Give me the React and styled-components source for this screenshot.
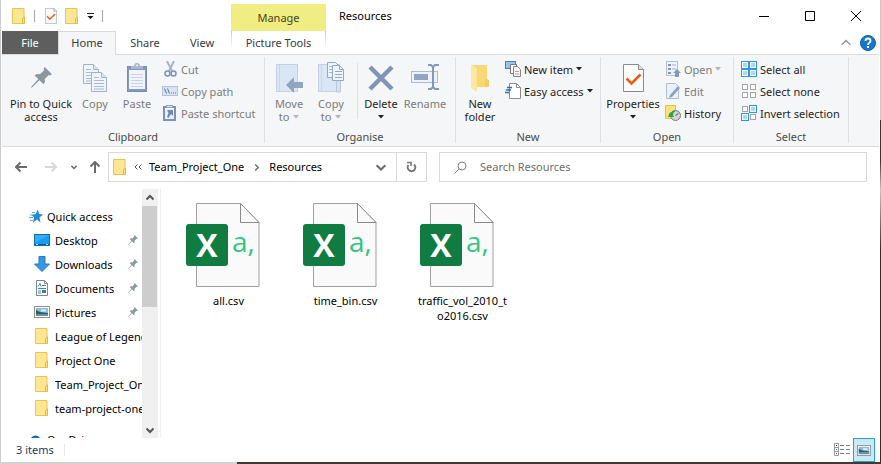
import React from "react";
import styled, { createGlobalStyle, css } from "styled-components";

const Global = createGlobalStyle`
  *, *::before, *::after { box-sizing: border-box; }
  body { margin: 0; font-family: "Noto Sans", "Open Sans", sans-serif; font-size: 11px; line-height: 13px; color: #1e1e1e; }
  button, input { font: inherit; color: inherit; margin: 0; padding: 0; border: 0; background: none; }
  button { white-space: nowrap; }
  h1, p, ul { margin: 0; padding: 0; font: inherit; list-style: none; }
  a { color: inherit; text-decoration: none; }
  svg { display: block; flex: none; }
`;

/* ---------- shell ---------- */
const Desktop = styled.div`
  height: 100vh;
  padding: 0 1px 2px 0;
  display: flex;
  background:
    linear-gradient(90deg, #d2d2d2 237px, #3c3936 237px) bottom / 100% 2px no-repeat,
    linear-gradient(180deg, #c9c9c9 120px, #44351b 120px, #38342d 160px, #c9c4bc 190px, #302d2a 250px);
`;
const Window = styled.main`
  flex: 1;
  min-width: 0;
  display: flex;
  flex-direction: column;
  background: #fff;
  border-left: 1px solid #cccccc;
  padding-left: 1px;
`;

/* ---------- title bar ---------- */
const TitleBar = styled.header`
  display: flex;
  align-items: center;
  height: 31px;
  padding-right: 1px;
`;
const QuickTools = styled.div`
  display: flex;
  align-items: center;
  width: 229px;
  padding-left: 10px;
  gap: 8px;
`;
const ToolButton = styled.button`
  ${(p) => p.$w && css`width: ${p.$w}px;`}
  display: flex;
  align-items: center;
  justify-content: center;
`;
const Bar = styled.span`
  width: 1px;
  height: 12px;
  margin-right: 2px;
  background: ${(p) => p.$c || "#a3a3a3"};
`;
const ContextTitle = styled.div`
  width: 95px;
  align-self: stretch;
  margin-top: 4px;
  background: #f0ee83;
  color: #46431f;
  display: flex;
  align-items: center;
  justify-content: center;
`;
const Title = styled.h1`
  flex: 1;
  padding-left: 13px;
  color: #000;
`;
const CaptionButton = styled.button`
  width: 46px;
  height: 30px;
  display: flex;
  align-items: center;
  justify-content: center;
`;

/* ---------- tabs ---------- */
const TabRow = styled.nav`
  display: flex;
  height: 23px;
  padding-right: 4px;
`;
const Tab = styled.button`
  width: ${(p) => p.$w}px;
  color: #3a3a3a;
  ${(p) => p.$kind === "file" && css`background: #5e5e5e; color: #fff;`}
  ${(p) => p.$kind === "active" && css`
    background: #f5f6f7;
    border: 1px solid #d8dadc;
    border-bottom: 0;
    margin-bottom: -1px;
    z-index: 1;
    padding-bottom: 2px;
  `}
  ${(p) => p.$kind === "context" && css`
    margin-left: 1px;
    border: solid transparent;
    border-width: 0 1px;
    border-image: linear-gradient(#c8c8c8, #ffffff 80%) 1;
  `}
`;
const TabEnd = styled.div`
  flex: 1;
  display: flex;
  justify-content: flex-end;
  align-items: center;
  gap: 9px;
`;

/* ---------- ribbon ---------- */
const Ribbon = styled.section`
  display: flex;
  margin-right: 1px;
  padding: 2px 0 3px;
  background: #f5f6f7;
  border: solid #d8dadc;
  border-width: 1px 0;
`;
const Group = styled.div`
  flex: none;
  width: ${(p) => p.$w}px;
  padding: 1px 0 0 ${(p) => p.$pad}px;
  border-right: 1px solid #dfe1e3;
  display: flex;
  flex-direction: column;
`;
const GroupItems = styled.div`
  display: flex;
  height: 68px;
`;
const GroupLabel = styled.p`
  margin-left: -${(p) => p.$pad}px;
  padding-top: 4px;
  text-align: center;
  color: #4b4b4b;
`;
const LargeButton = styled.button`
  width: ${(p) => p.$w}px;
  display: flex;
  flex-direction: column;
  align-items: center;
  color: ${(p) => (p.$off ? "#7b7b7b" : "#1e1e1e")};
`;
const IconBox = styled.span`
  height: 39px;
  display: flex;
  align-items: center;
`;
const Line = styled.span`
  display: flex;
  align-items: center;
  gap: 4px;
  min-height: 13px;
`;
const GroupDivider = styled.span`
  width: 1px;
  height: 56px;
  margin: 5px 1px 0 4px;
  background: #dfe1e3;
`;
const SmallColumn = styled.div`
  display: flex;
  flex-direction: column;
  margin-left: ${(p) => p.$ml || 0}px;
`;
const SmallButton = styled.button`
  height: 22px;
  display: flex;
  align-items: center;
  gap: 3px;
  color: ${(p) => (p.$off ? "#7b7b7b" : "#1e1e1e")};
`;

/* ---------- address row ---------- */
const AddressRow = styled.div`
  display: flex;
  align-items: center;
  padding: 5px 13px 7px 4px;
`;
const NavButtons = styled.div`
  display: flex;
  align-items: center;
`;
const AddressBox = styled.div`
  flex: 317 1 0;
  min-width: 0;
  height: 30px;
  border: 1px solid #d9d9d9;
  display: flex;
  align-items: center;
  color: #000;
`;
const Crumbs = styled.nav`
  flex: 1;
  display: flex;
  align-items: center;
  padding-left: 4px;
  gap: 7px;
`;
const Crumb = styled.button`
  padding-bottom: 2px;
`;
const CrumbArrow = styled.span`
  width: 11px;
  display: flex;
  justify-content: center;
`;
const RefreshButton = styled.button`
  width: 30px;
  align-self: stretch;
  border-left: 1px solid #d9d9d9;
  display: flex;
  align-items: center;
  justify-content: center;
  margin-left: 10px;
`;
const SearchBox = styled.label`
  flex: 412 1 0;
  min-width: 0;
  height: 30px;
  margin-left: 12px;
  border: 1px solid #d9d9d9;
  display: flex;
  align-items: center;
  padding-left: 14px;
  gap: 13px;
`;
const SearchInput = styled.input`
  flex: 1;
  min-width: 0;
  padding-bottom: 2px;
  outline: none;
  &::placeholder { color: #6d6d6d; opacity: 1; }
`;

/* ---------- body ---------- */
const Body = styled.div`
  flex: 1;
  min-height: 0;
  display: flex;
`;
const Sidebar = styled.aside`
  width: 159px;
  display: flex;
  border-right: 1px solid #f0f0f0;
  padding-right: 2px;
`;
const Tree = styled.ul`
  flex: 1;
  min-width: 0;
  overflow: hidden;
  padding-top: 15px;
  color: #000;
`;
const TreeItem = styled.li`
  margin-top: ${(p) => (p.$section ? 7 : 0)}px;
`;
const TreeLink = styled.a`
  display: flex;
  align-items: center;
  height: 24px;
  padding-left: ${(p) => (p.$root ? 26 : 32)}px;
  gap: ${(p) => (p.$root ? 3 : 5)}px;
`;
const TreeText = styled.span`
  flex: 1;
  min-width: 0;
  overflow: hidden;
  white-space: nowrap;
  line-height: 19px;
`;
const PinSlot = styled.span`
  padding-right: 4px;
`;
const ScrollTrack = styled.div`
  width: 16px;
  background: #f0f0f0;
  display: flex;
  flex-direction: column;
`;
const ScrollArrow = styled.button`
  height: 17px;
  display: flex;
  align-items: center;
  justify-content: center;
`;
const ScrollThumb = styled.div`
  height: 101px;
  margin-right: 1px;
  background: #cdcdcd;
`;
const Spacer = styled.div`
  flex: 1;
`;
const Files = styled.section`
  flex: 1;
  min-width: 0;
  display: flex;
  flex-wrap: wrap;
  align-content: flex-start;
  padding: 13px 0 0 9px;
`;
const File = styled.button`
  width: 117px;
  display: flex;
  flex-direction: column;
  align-items: center;
  justify-content: flex-start;
  gap: 5px;
  color: #000;
`;
const FileName = styled.span`
  width: 94px;
  line-height: 15px;
  white-space: normal;
  word-break: break-all;
`;

/* ---------- status bar ---------- */
const StatusBar = styled.footer`
  display: flex;
  align-items: center;
  height: 24px;
  padding: 0 5px 0 14px;
  gap: 10px;
  color: #1f3a5f;
`;
const StatusText = styled.span`
  padding-bottom: 2px;
`;
const ViewButtons = styled.div`
  margin-left: auto;
  display: flex;
  align-self: stretch;
`;
const ViewButton = styled.button`
  width: 22px;
  display: flex;
  align-items: center;
  justify-content: center;
  ${(p) => p.$on && css`background: #cce8f7; border: 1px solid #26a0da;`}
`;

/* ---------- icons ---------- */
const Folder = () => (
  <svg width="14" height="16" viewBox="0 0 14 16">
    <path d="M.5.5h11.500v15H.5z" fill="#ffe694" stroke="#e8c34e" />
    <path d="M10.500 10.500l2-1.500v6.500h-2z" fill="#ffe08a" stroke="#e3b93f" />
  </svg>
);
const CheckDoc = ({ w, h }) => (
  <svg width={w} height={h} viewBox="0 0 21 28" preserveAspectRatio="none">
    <path d="M.5.5h15l5 5v22H.5z" fill="#fafafa" stroke="#8b8b8b" />
    <path d="M15.500.5v5h5" fill="#e4e4e4" stroke="#8b8b8b" />
    <path d="M3.500 14.500l5 5L17.500 10.500" fill="none" stroke="#f25a14" strokeWidth="2.500" />
  </svg>
);
const Caret = ({ off }) => (
  <svg width="6" height="4" viewBox="0 0 6 4"><path d="M0 0h6L3 3.500z" fill={off ? "#b4b4b4" : "#1e1e1e"} /></svg>
);
const CustomizeIcon = () => (
  <svg width="7" height="8" viewBox="0 0 7 8"><path d="M0 1.500h7" stroke="#222" /><path d="M.5 4h6l-3 3z" fill="#111" /></svg>
);
const Pin = ({ s, c = "#8c97a0" }) => (
  <svg width={s} height={s} viewBox="0 0 20 20">
    <path d="M13 0l7 7-2 1-1-.5-4 4q1 3-1 5L8 12.500 1 19.500 0 20l.5-1.500 6.500-7L3.500 8q2-2 5-1l4-4L12 2z" fill={c} />
  </svg>
);
const page = (x, y) => (
  <g transform={`translate(${x} ${y})`}>
    <path d="M.5.5h10l5 5v14H.5z" fill="#eff4fb" stroke="#9fb3d1" />
    <path d="M10.500.5v5h5" fill="#dbe5f3" stroke="#9fb3d1" />
    <path d="M3 5.500h5M3 8.500h10M3 11.500h10M3 14.500h10M3 17h10" stroke="#a9bbd6" />
  </g>
);
const CopyIcon = () => <svg width="24" height="28" viewBox="0 0 24 28">{page(0, 0)}{page(8, 8)}</svg>;
const PasteIcon = () => (
  <svg width="20" height="29" viewBox="0 0 20 29">
    <rect x=".5" y="3.5" width="19" height="25" fill="#8398bd" stroke="#788db3" />
    <rect x="2" y="7" width="16" height="19" fill="#f1f5fb" />
    <path d="M4 11.500h12M4 14.500h12M4 17.500h12M4 20.500h12M4 23.500h12" stroke="#c6d2e6" />
    <path d="M4 6V3h3q0-3 3-3t3 3h3v3z" fill="#aab7ca" />
    <circle cx="10" cy="2.500" r="1" fill="#f5f6f7" />
  </svg>
);
const CutIcon = () => (
  <svg width="16" height="16" viewBox="0 0 16 16" fill="none">
    <path d="M5 0l5 10M12 0L7 10" stroke="#a7b5cc" strokeWidth="2" />
    <circle cx="5.500" cy="12.500" r="2.500" stroke="#7e92b6" strokeWidth="1.500" />
    <circle cx="11.500" cy="12.500" r="2.500" stroke="#7e92b6" strokeWidth="1.500" />
  </svg>
);
const PathIcon = () => (
  <svg width="16" height="10" viewBox="0 0 16 10">
    <rect x=".5" y=".5" width="15" height="9" fill="#d8e2f0" stroke="#b3c2da" />
    <path d="M2.500 2.500l2 5M5.500 2.500l2 5M9 7h1M11 7h1M13 7h1" stroke="#5d759f" />
  </svg>
);
const ShortcutIcon = () => (
  <svg width="16" height="16" viewBox="0 0 16 16">
    <rect x="2" y="2" width="11" height="13" fill="#fff" stroke="#7c91b7" strokeWidth="2" />
    <rect x="4.500" y=".5" width="6" height="2" fill="#dfe8f4" stroke="#8da0c2" />
    <rect x="3" y="4" width="9" height="10" fill="#eaf0f8" />
    <path d="M5 5h6v6l-2-2-2.500 4-1.500-1 1.500-4z" fill="#7288b0" />
  </svg>
);
const FolderTo = ({ copy }) => (
  <svg width="27" height="31" viewBox="0 0 27 31">
    <path d="M.5 2.500h21v27H.5z" fill="#dbe6f4" stroke="#c2d1e6" />
    <path d="M3.500 3v26" stroke="#c8d6e9" />
    {copy ? (
      <g>
        <path d="M18.500 19h4v11h-4z" fill="#d6e2f1" stroke="#b7c9e1" />
        <path d="M9.500.5h8l3 3v12h-11z" fill="#eff4fb" stroke="#92a7ca" />
        <path d="M11 4.500h7M11 7.500h7M11 10.500h7" stroke="#a5b7d3" />
        <path d="M14.500 3.500h7l4 4v11h-11z" fill="#eff4fb" stroke="#92a7ca" />
        <path d="M21.500 3.500v4h4M17 9.500h7M17 12.500h7M17 15.500h7" fill="none" stroke="#92a7ca" />
      </g>
    ) : (
      <path d="M10 23l8-8v5h9v6h-9v5z" fill="#91a4c4" />
    )}
  </svg>
);
const DeleteIcon = () => (
  <svg width="26" height="26" viewBox="0 0 26 26"><path d="M2 2l22 22M24 2L2 24" stroke="#8094b8" strokeWidth="4.500" /></svg>
);
const RenameIcon = () => (
  <svg width="28" height="28" viewBox="0 0 28 28">
    <rect x=".5" y="7.5" width="26" height="11" fill="#eef3fa" stroke="#aabbd5" />
    <rect x="3" y="10" width="14" height="6" fill="#91a4c5" />
    <path d="M17 1h3l2 2 2-2h4M22 2v22M17 25h3l2-2 2 2h4" fill="none" stroke="#8297bb" strokeWidth="2" />
  </svg>
);
const NewFolderIcon = () => (
  <svg width="20" height="29" viewBox="0 0 20 29">
    <path d="M1 2h16v14l2 8H6z" fill="#f8d775" />
    <path d="M1 2l6 3v24l-6-4z" fill="#ffe89e" />
    <path d="M15 15l4 2v7h-4z" fill="#f3ce67" />
  </svg>
);
const NewItemIcon = () => (
  <svg width="16" height="16" viewBox="0 0 16 16">
    <rect x=".5" y=".5" width="10" height="7" fill="#8fc9ee" stroke="#5d7f96" />
    <path d="M5.500 3.500h6v9h-6z" fill="#fff" stroke="#777" />
    <path d="M8.500 5.500h4l3 3v7h-7z" fill="#f6f8fb" stroke="#858585" />
    <path d="M10 10.500h4M10 13h4" stroke="#d79090" />
  </svg>
);
const EasyIcon = () => (
  <svg width="16" height="16" viewBox="0 0 16 16">
    <path d="M4.500.5h7l4 4v11h-11z" fill="#fff" stroke="#8b8b8b" />
    <path d="M11.500.5v4h4" fill="none" stroke="#8b8b8b" />
    <path d="M2 4.500h5M1 7h5M0 9.500h4" stroke="#2f6ea5" strokeWidth="1.500" />
  </svg>
);
const OpenIcon = () => (
  <svg width="16" height="16" viewBox="0 0 16 16">
    <rect x="1.5" y=".5" width="11" height="14" fill="#eef3fa" stroke="#b0c0d9" />
    <path d="M3 3h3v2H3zM3 7h3v2H3zM3 11h3v2H3z" fill="#7f94b8" />
    <path d="M7 4h4M7 8h4" stroke="#9eb1cf" />
    <path d="M12 8l4 4h-2v4h-4v-4H8z" fill="#8398bd" />
  </svg>
);
const EditIcon = () => (
  <svg width="16" height="16" viewBox="0 0 16 16">
    <path d="M1.500.5h9l3 3v12h-12z" fill="#eaf1fa" stroke="#aebfd9" />
    <path d="M13 3l2 2-8 9-3 1 1-3z" fill="#8da2c4" />
  </svg>
);
const HistoryIcon = () => (
  <svg width="16" height="16" viewBox="0 0 16 16">
    <path d="M.5.5h10v13H.5z" fill="#ffe07a" stroke="#e6bf4a" />
    <circle cx="10.500" cy="10.500" r="5" fill="#d4d4d4" stroke="#7d7d7d" />
    <path d="M10.500 10.500l3-2" stroke="#555" />
    <path d="M3 12l2-5 1 1q2-3 5-2-3 1-3 4l1 2z" fill="#29a745" />
  </svg>
);
const SelectIcon = ({ on }) => (
  <svg width="16" height="16" viewBox="0 0 16 16">
    {[[0, 0], [8, 0], [0, 8], [8, 8]].map(([x, y], i) => (
      <g key={i} transform={`translate(${x} ${y})`}>
        {on[i] ? (
          <>
            <rect x=".5" y=".5" width="7" height="7" fill="#f4faff" stroke="#2f93e0" />
            <rect x="2" y="2" width="4" height="4" fill="#a9d8f9" />
          </>
        ) : (
          <rect x="1.5" y="1.5" width="5" height="5" fill="#fff" stroke="#a3a3a3" />
        )}
      </g>
    ))}
  </svg>
);
const Arrow = ({ dir, c = "#6b6b6b" }) => (
  <svg width="12" height="12" viewBox="0 0 12 12" fill="none" stroke={c} strokeWidth="2">
    {dir === "left" && <path d="M12 6H1M5.500 1.500L1 6l4.500 4.500" />}
    {dir === "right" && <path d="M0 6h11M6.500 1.500L11 6l-4.500 4.500" />}
    {dir === "up" && <path d="M6 12V1M1.500 5.500L6 1l4.500 4.500" />}
  </svg>
);
const Chevron = ({ dir = "down", w = 8, c = "#6b6b6b", sw = 2 }) => (
  <svg width={w} height={w} viewBox="0 0 8 8" fill="none" stroke={c} strokeWidth={sw}>
    {dir === "down" && <path d="M.5 2.500L4 6l3.500-3.500" />}
    {dir === "up" && <path d="M.5 5.500L4 2l3.500 3.500" />}
    {dir === "right" && <path d="M2.500.5L6 4 2.500 7.500" />}
  </svg>
);
const DoubleLeft = () => (
  <svg width="8" height="6" viewBox="0 0 8 6" fill="none" stroke="#555"><path d="M3.500.5L1 3l2.500 2.500M7.500.5L5 3l2.500 2.500" /></svg>
);
const Refresh = () => (
  <svg width="11" height="12" viewBox="0 0 11 12" fill="none" stroke="#777" strokeWidth="2">
    <path d="M8 3.500a3.800 3.800 0 1 1-5.500.5" /><path d="M1 1.500h4v3.500" strokeWidth="1.500" />
  </svg>
);
const SearchIcon = () => (
  <svg width="13" height="13" viewBox="0 0 13 13" fill="none" stroke="#85808c">
    <circle cx="8" cy="5" r="4" /><path d="M5 8l-4.500 4.500" />
  </svg>
);
const Star = () => (
  <svg width="14" height="14" viewBox="0 0 14 14">
    <path d="M9 .5l1 4.500 4 .5-3.500 3 1 5L8 10.500 4 13.500l1-5L2.500 6l4-1z" fill="#2588d8" />
    <path d="M3 3.500h3M1 6h3M0 8.500h4M1 11.500h3" stroke="#5bb0e8" />
  </svg>
);
const DesktopIcon = () => (
  <svg width="16" height="12" viewBox="0 0 16 12">
    <rect x=".5" y=".5" width="15" height="11" fill="#1a9bf2" stroke="#126eb3" />
    <path d="M1 9V1h14z" fill="#34adfb" /><path d="M1 10.500h14" stroke="#0b5c98" /><path d="M2 10.500h2M12 10.500h2" stroke="#bfe3fb" />
  </svg>
);
const DownIcon = () => (
  <svg width="16" height="16" viewBox="0 0 16 16"><path d="M5 .5h6V8h4.500L8 15.500.5 8H5z" fill="#3a96e4" stroke="#2379c6" /></svg>
);
const DocIcon = () => (
  <svg width="16" height="16" viewBox="0 0 16 16">
    <path d="M2.500.5h8l3 3v12h-11z" fill="#fff" stroke="#858585" />
    <path d="M10.500.5v3h3" fill="none" stroke="#858585" />
    <path d="M4 6.500l2-3 1 3M8 5.500h4M4 8.500h8M4 13h3M4 11h3" fill="none" stroke="#3187c9" />
    <rect x="8" y="10" width="4" height="3" fill="#447b86" />
  </svg>
);
const PictureIcon = ({ w = 16, h = 12 }) => (
  <svg width={w} height={h} viewBox="0 0 16 12" preserveAspectRatio="none">
    <rect x=".5" y=".5" width="15" height="11" fill="#fff" stroke="#8f8f8f" />
    <path d="M2 2h12v8H2z" fill="#8dbbe8" />
    <path d="M2 4l4 2 8 1v1H2z" fill="#315f4f" /><path d="M2 8h12v2H2z" fill="#668da7" />
    <path d="M7 3.500h5v2H7z" fill="#dcecf8" />
  </svg>
);
const CloudIcon = () => (
  <svg width="16" height="10" viewBox="0 0 16 10"><path d="M3 10a3 3 0 0 1 0-6 5 4.500 0 0 1 9 0 3 3 0 0 1 1 6z" fill="#0f6cbd" /></svg>
);
const DetailsIcon = () => (
  <svg width="16" height="14" viewBox="0 0 16 14" fill="none">
    <path d="M.5.5h4v12h-4zM.5 4.500h4M.5 8.500h4" stroke="#9a9a9a" />
    <path d="M2 2.500h1" stroke="#333" /><path d="M2 6.500h1" stroke="#2f93e0" /><path d="M2 10.500h1" stroke="#c33" />
    <path d="M6 2.500h4M12 2.500h4M6 6.500h4M12 6.500h4M6 10.500h4M12 10.500h4" stroke="#7a7a7a" />
  </svg>
);
const CsvIcon = () => (
  <svg width="86" height="86" viewBox="0 0 86 86">
    <path d="M10.500 1.500h44l18.500 19v64h-62.500z" fill="#fafafa" stroke="#a0a0a0" />
    <path d="M54.500 1.500v19H73z" fill="#fafafa" stroke="#8a8a8a" />
    <rect x="0" y="22" width="42" height="42" rx="3" fill="#107c41" />
    <text x="21" y="55" textAnchor="middle" fontFamily="Open Sans" fontWeight="700" fontSize="32" fill="#fff">X</text>
    <text x="46" y="50" fontFamily="Open Sans" fontSize="28" fill="#33c481">a,</text>
  </svg>
);
const HelpIcon = () => (
  <svg width="16" height="16" viewBox="0 0 16 16">
    <circle cx="8" cy="8" r="7.500" fill="#1577d2" stroke="#0a5cab" />
    <path d="M5.500 6q0-2.500 2.500-2.500T10.500 6Q10.500 7 9 8 8 8.600 8 10" fill="none" stroke="#fff" strokeWidth="1.800" />
    <rect x="7" y="11" width="2" height="2" fill="#fff" />
  </svg>
);

/* ---------- composed parts ---------- */
function Large({ w, off, icon, lines, caret }) {
  return (
    <LargeButton $w={w} $off={off} disabled={off}>
      <IconBox>{icon}</IconBox>
      {lines.map((t, i) => (
        <Line key={t}>{t}{caret === "inline" && i === lines.length - 1 && <Caret off={off} />}</Line>
      ))}
      {caret === "below" && <Line><Caret off={off} /></Line>}
    </LargeButton>
  );
}
const Slot = styled.span`
  width: 16px;
  display: flex;
  justify-content: center;
`;
function Small({ off, icon, children, caret }) {
  return (
    <SmallButton $off={off} disabled={off}>
      <Slot>{icon}</Slot>
      <span>{children}</span>
      {caret && <Caret off={off} />}
    </SmallButton>
  );
}
function RibbonGroup({ w, pad, label, children }) {
  return (
    <Group $w={w} $pad={pad}>
      <GroupItems>{children}</GroupItems>
      <GroupLabel $pad={pad}>{label}</GroupLabel>
    </Group>
  );
}

const tree = [
  { name: "Quick access", icon: <Star />, root: true },
  { name: "Desktop", icon: <DesktopIcon />, pin: true },
  { name: "Downloads", icon: <DownIcon />, pin: true },
  { name: "Documents", icon: <DocIcon />, pin: true },
  { name: "Pictures", icon: <PictureIcon />, pin: true },
  { name: "League of Legends", icon: <Folder /> },
  { name: "Project One", icon: <Folder /> },
  { name: "Team_Project_One", icon: <Folder /> },
  { name: "team-project-one", icon: <Folder /> },
  { name: "OneDrive", icon: <CloudIcon />, root: true, section: true },
];
const files = ["all.csv", "time_bin.csv", "traffic_vol_2010_to2016.csv"];

export default function App() {
  return (
    <Desktop>
      <Global />
      <Window>
        <TitleBar>
          <QuickTools>
            <Folder />
            <Bar />
            <ToolButton aria-label="Properties"><CheckDoc w={12} h={16} /></ToolButton>
            <ToolButton aria-label="New folder"><Folder /></ToolButton>
            <ToolButton aria-label="Customise toolbar"><CustomizeIcon /></ToolButton>
            <Bar />
          </QuickTools>
          <ContextTitle>Manage</ContextTitle>
          <Title>Resources</Title>
          <CaptionButton aria-label="Minimise"><svg width="10" height="10"><path d="M0 5.500h10" stroke="#000" /></svg></CaptionButton>
          <CaptionButton aria-label="Maximise"><svg width="10" height="10"><path d="M.5.5h9v9h-9z" fill="none" stroke="#000" /></svg></CaptionButton>
          <CaptionButton aria-label="Close"><svg width="10" height="10"><path d="M0 0l10 10M10 0L0 10" stroke="#000" /></svg></CaptionButton>
        </TitleBar>
        <TabRow>
          <Tab $w={56} $kind="file">File</Tab>
          <Tab $w={58} $kind="active">Home</Tab>
          <Tab $w={58}>Share</Tab>
          <Tab $w={56}>View</Tab>
          <Tab $w={95} $kind="context">Picture Tools</Tab>
          <TabEnd>
            <ToolButton aria-label="Collapse ribbon"><Chevron dir="up" w={10} c="#8a8a8a" sw={1} /></ToolButton>
            <ToolButton aria-label="Help"><HelpIcon /></ToolButton>
          </TabEnd>
        </TabRow>
        <Ribbon>
          <RibbonGroup w={263} pad={2} label="Clipboard">
            <Large w={74} icon={<Pin s={21} />} lines={["Pin to Quick", "access"]} />
            <Large w={34} off icon={<CopyIcon />} lines={["Copy"]} />
            <Large w={50} off icon={<PasteIcon />} lines={["Paste"]} />
            <SmallColumn>
              <Small off icon={<CutIcon />}>Cut</Small>
              <Small off icon={<PathIcon />}>Copy path</Small>
              <Small off icon={<ShortcutIcon />}>Paste shortcut</Small>
            </SmallColumn>
          </RibbonGroup>
          <RibbonGroup w={191} pad={4} label="Organise">
            <Large w={40} off icon={<FolderTo />} lines={["Move", "to"]} caret="inline" />
            <Large w={44} off icon={<FolderTo copy />} lines={["Copy", "to"]} caret="inline" />
            <GroupDivider />
            <Large w={44} icon={<DeleteIcon />} lines={["Delete"]} caret="below" />
            <Large w={44} off icon={<RenameIcon />} lines={["Rename"]} />
          </RibbonGroup>
          <RibbonGroup w={145} pad={2} label="New">
            <Large w={44} icon={<NewFolderIcon />} lines={["New", "folder"]} />
            <SmallColumn $ml={3}>
              <Small icon={<NewItemIcon />} caret>New item</Small>
              <Small icon={<EasyIcon />} caret>Easy access</Small>
            </SmallColumn>
          </RibbonGroup>
          <RibbonGroup w={133} pad={2} label="Open">
            <Large w={60} icon={<CheckDoc w={21} h={28} />} lines={["Properties"]} caret="below" />
            <SmallColumn $ml={2}>
              <Small off icon={<OpenIcon />} caret>Open</Small>
              <Small off icon={<EditIcon />}>Edit</Small>
              <Small icon={<HistoryIcon />}>History</Small>
            </SmallColumn>
          </RibbonGroup>
          <RibbonGroup w={115} pad={7} label="Select">
            <SmallColumn>
              <Small icon={<SelectIcon on={[1, 1, 1, 1]} />}>Select all</Small>
              <Small icon={<SelectIcon on={[0, 0, 0, 0]} />}>Select none</Small>
              <Small icon={<SelectIcon on={[0, 1, 1, 0]} />}>Invert selection</Small>
            </SmallColumn>
          </RibbonGroup>
        </Ribbon>
        <AddressRow>
          <NavButtons>
            <ToolButton $w={30} aria-label="Back"><Arrow dir="left" /></ToolButton>
            <ToolButton $w={30} aria-label="Forward"><Arrow dir="right" c="#d8d8d8" /></ToolButton>
            <ToolButton $w={16} aria-label="Recent locations"><Chevron w={6} /></ToolButton>
            <ToolButton $w={26} aria-label="Up"><Arrow dir="up" /></ToolButton>
          </NavButtons>
          <AddressBox>
            <Crumbs aria-label="Path">
              <Folder />
              <DoubleLeft />
              <Crumb>Team_Project_One</Crumb>
              <CrumbArrow><Chevron dir="right" w={7} sw={1.6} /></CrumbArrow>
              <Crumb>Resources</Crumb>
            </Crumbs>
            <ToolButton aria-label="Previous locations"><Chevron w={10} sw={1.6} /></ToolButton>
            <RefreshButton aria-label="Refresh"><Refresh /></RefreshButton>
          </AddressBox>
          <SearchBox>
            <SearchIcon />
            <SearchInput type="text" aria-label="Search Resources" placeholder="Search Resources" />
          </SearchBox>
        </AddressRow>
        <Body>
          <Sidebar>
            <Tree>
              {tree.map((t) => (
                <TreeItem key={t.name} $section={t.section}>
                  <TreeLink href="#" $root={t.root}>
                    <Slot>{t.icon}</Slot>
                    <TreeText>{t.name}</TreeText>
                    {t.pin && <PinSlot><Pin s={10} /></PinSlot>}
                  </TreeLink>
                </TreeItem>
              ))}
            </Tree>
            <ScrollTrack>
              <ScrollArrow aria-label="Scroll up"><Chevron dir="up" c="#555" /></ScrollArrow>
              <ScrollThumb />
              <Spacer />
              <ScrollArrow aria-label="Scroll down"><Chevron c="#555" /></ScrollArrow>
            </ScrollTrack>
          </Sidebar>
          <Files>
            {files.map((f) => (
              <File key={f}>
                <CsvIcon />
                <FileName>{f}</FileName>
              </File>
            ))}
          </Files>
        </Body>
        <StatusBar>
          <StatusText>3 items</StatusText>
          <Bar $c="#e6e6e6" />
          <ViewButtons>
            <ViewButton aria-label="Details view"><DetailsIcon /></ViewButton>
            <ViewButton $on aria-label="Large icons view"><PictureIcon w={14} h={11} /></ViewButton>
          </ViewButtons>
        </StatusBar>
      </Window>
    </Desktop>
  );
}
